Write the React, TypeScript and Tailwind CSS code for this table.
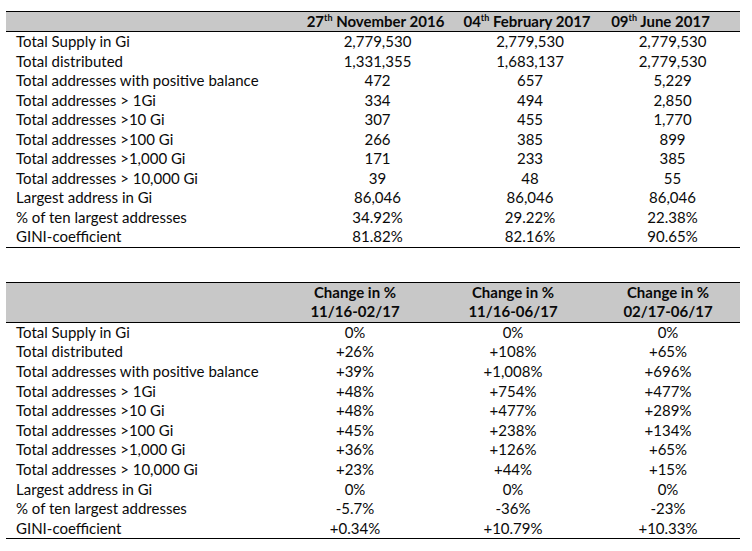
import React from "react";

const font = { fontFamily: "Lato, 'Open Sans', sans-serif" };

const labels = [
  "Total Supply in Gi",
  "Total distributed",
  "Total addresses with positive balance",
  "Total addresses > 1Gi",
  "Total addresses >10 Gi",
  "Total addresses >100 Gi",
  "Total addresses >1,000 Gi",
  "Total addresses > 10,000 Gi",
  "Largest address in Gi",
  "% of ten largest addresses",
  "GINI-coefficient",
];

const snapshot = [
  ["2,779,530", "2,779,530", "2,779,530"],
  ["1,331,355", "1,683,137", "2,779,530"],
  ["472", "657", "5,229"],
  ["334", "494", "2,850"],
  ["307", "455", "1,770"],
  ["266", "385", "899"],
  ["171", "233", "385"],
  ["39", "48", "55"],
  ["86,046", "86,046", "86,046"],
  ["34.92%", "29.22%", "22.38%"],
  ["81.82%", "82.16%", "90.65%"],
];

const changes = [
  ["0%", "0%", "0%"],
  ["+26%", "+108%", "+65%"],
  ["+39%", "+1,008%", "+696%"],
  ["+48%", "+754%", "+477%"],
  ["+48%", "+477%", "+289%"],
  ["+45%", "+238%", "+134%"],
  ["+36%", "+126%", "+65%"],
  ["+23%", "+44%", "+15%"],
  ["0%", "0%", "0%"],
  ["-5.7%", "-36%", "-23%"],
  ["+0.34%", "+10.79%", "+10.33%"],
];

function Dated({ day, rest }: { day: string; rest: string }) {
  return (
    <span>
      {day}
      <sup className="text-[9px] font-bold relative -top-[6px] align-baseline">th</sup> {rest}
    </span>
  );
}

function Rows({ data, cols, rowH }: { data: string[][]; cols: string; rowH: string }) {
  return (
    <>
      {data.map((row, i) => (
        <div key={i} className={`grid ${cols} ${rowH} items-center`}>
          <div className="pl-[10px]">{labels[i]}</div>
          {row.map((v, j) => (
            <div key={j} className="text-center">
              {v}
            </div>
          ))}
        </div>
      ))}
    </>
  );
}

export default function App() {
  const cols1 = "grid-cols-[294px_155px_150px_135px]";
  const cols2 = "grid-cols-[274px_150px_166px_144px]";
  return (
    <div className="w-[752px] h-[551px] bg-white text-[15px] text-[#0a0a0a] leading-none" style={font}>
      <div className="pt-[11px] pl-[6px] w-[740px]">
        <div className="border-t-[1.5px] border-b-[1.5px] border-black">
          <div className={`grid ${cols1} h-[20px] items-center bg-[#c8c8c8] font-bold border-b-[1.5px] border-black`}>
            <div />
            <div className="text-center pr-[4px]">
              <Dated day="27" rest="November 2016" />
            </div>
            <div className="text-center pr-[6px]">
              <Dated day="04" rest="February 2017" />
            </div>
            <div className="text-center pr-[24px]">
              <Dated day="09" rest="June 2017" />
            </div>
          </div>
          <Rows data={snapshot} cols={cols1} rowH="h-[19.5px]" />
        </div>

        <div className="mt-[34px] border-t-[1.5px] border-b-[1.5px] border-black">
          <div className={`grid ${cols2} h-[40px] items-center bg-[#c8c8c8] font-bold border-b-[1.5px] border-black leading-[19px]`}>
            <div />
            <div className="text-center">
              Change in %<br />11/16-02/17
            </div>
            <div className="text-center">
              Change in %<br />11/16-06/17
            </div>
            <div className="text-center">
              Change in %<br />02/17-06/17
            </div>
          </div>
          <Rows data={changes} cols={cols2} rowH="h-[19.6px]" />
        </div>
      </div>
    </div>
  );
}
